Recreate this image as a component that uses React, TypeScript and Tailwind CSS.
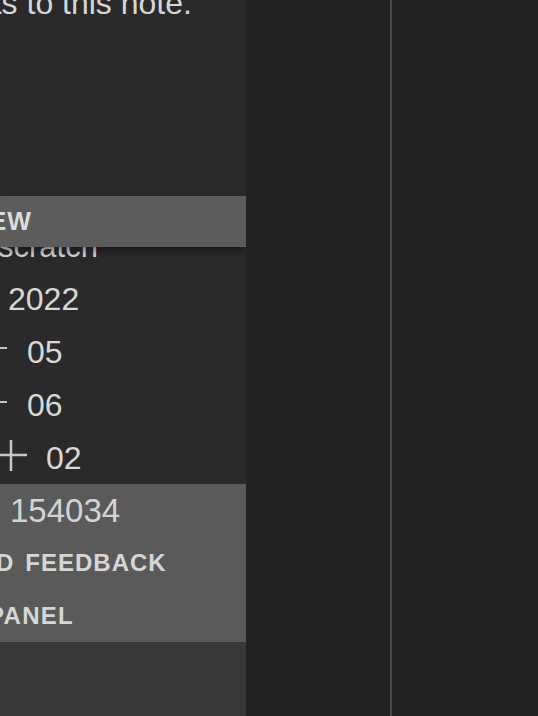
import React from 'react';

const font = { fontFamily: '"Liberation Sans", Arial, sans-serif' };

function Dash({ lift }: { lift: string }) {
  return <div className={`w-[7px] h-[2px] bg-[#c4c4c4] shrink-0 ${lift}`} />;
}

export default function App() {
  return (
    <div className="w-[538px] h-[716px] flex overflow-hidden bg-[#222222]" style={font}>
      {/* Sidebar */}
      <div className="w-[246px] h-full flex flex-col bg-[#2a2a2a] overflow-hidden shrink-0">
        {/* Note body (scrolled) */}
        <div className="h-[196px] shrink-0">
          <p className="-mt-[17px] -ml-[130px] text-[32px] leading-[40px] text-[#d6d6d6] whitespace-nowrap">
            comments to this note.
          </p>
        </div>

        {/* Sticky section header */}
        <div className="relative z-10 h-[51px] shrink-0 bg-[#5c5c5c] flex items-center shadow-[0_4px_8px_rgba(0,0,0,0.45)]">
          <span className="-ml-[36px] text-[25px] font-bold tracking-[1px] text-[#dcdcdc] whitespace-nowrap leading-none">
            VIEW
          </span>
        </div>

        {/* File tree */}
        <div className="-mt-[26px] h-[51px] shrink-0 flex items-center">
          <span className="-ml-[2px] text-[31px] leading-none text-[#d8d8d8] whitespace-nowrap">scratch</span>
        </div>
        <div className="h-[53px] shrink-0 flex items-center">
          <span className="ml-[8px] text-[32px] leading-none text-[#d8d8d8]">2022</span>
        </div>
        <div className="h-[54px] shrink-0 flex items-center">
          <Dash lift="mb-[8px]" />
          <span className="ml-[20px] text-[32px] leading-none text-[#d8d8d8]">05</span>
        </div>
        <div className="h-[52px] shrink-0 flex items-center">
          <Dash lift="mb-[6px]" />
          <span className="ml-[20px] text-[32px] leading-none text-[#d8d8d8]">06</span>
        </div>
        <div className="h-[53px] shrink-0 flex items-center">
          <svg width="27" height="31" viewBox="0 0 27 31" className="shrink-0 mb-[4px]">
            <line x1="11" y1="0" x2="11" y2="31" stroke="#c8c8c8" strokeWidth="2.5" />
            <line x1="0" y1="15" x2="27" y2="15" stroke="#c8c8c8" strokeWidth="2.5" />
          </svg>
          <span className="ml-[19px] text-[32px] leading-none text-[#d8d8d8]">02</span>
        </div>

        {/* Highlighted block */}
        <div className="shrink-0 bg-[#5a5a5a]">
          <div className="h-[52px] flex items-center pt-[2px] border-b border-[#575757]">
            <span className="ml-[10px] text-[33px] leading-none text-[#d4d4d4]">154034</span>
          </div>
          <div className="h-[54px] flex items-center">
            <span className="-ml-[4px] text-[24px] font-bold tracking-[1px] text-[#d6d6d6] leading-none whitespace-nowrap">
              D<span className="ml-[11px]">FEEDBACK</span>
            </span>
          </div>
          <div className="h-[52px] flex items-center">
            <span className="-ml-[12px] text-[24px] font-bold tracking-[1.3px] text-[#d6d6d6] leading-none whitespace-nowrap">
              PANEL
            </span>
          </div>
        </div>

        <div className="flex-1 bg-[#383838]" />
      </div>

      {/* Editor panes */}
      <div className="flex-1 flex h-full">
        <div className="w-[144px] h-full bg-[#222222]" />
        <div className="w-[2px] h-full bg-[#4a4a4a]" />
        <div className="flex-1 h-full bg-[#222222]" />
      </div>
    </div>
  );
}
